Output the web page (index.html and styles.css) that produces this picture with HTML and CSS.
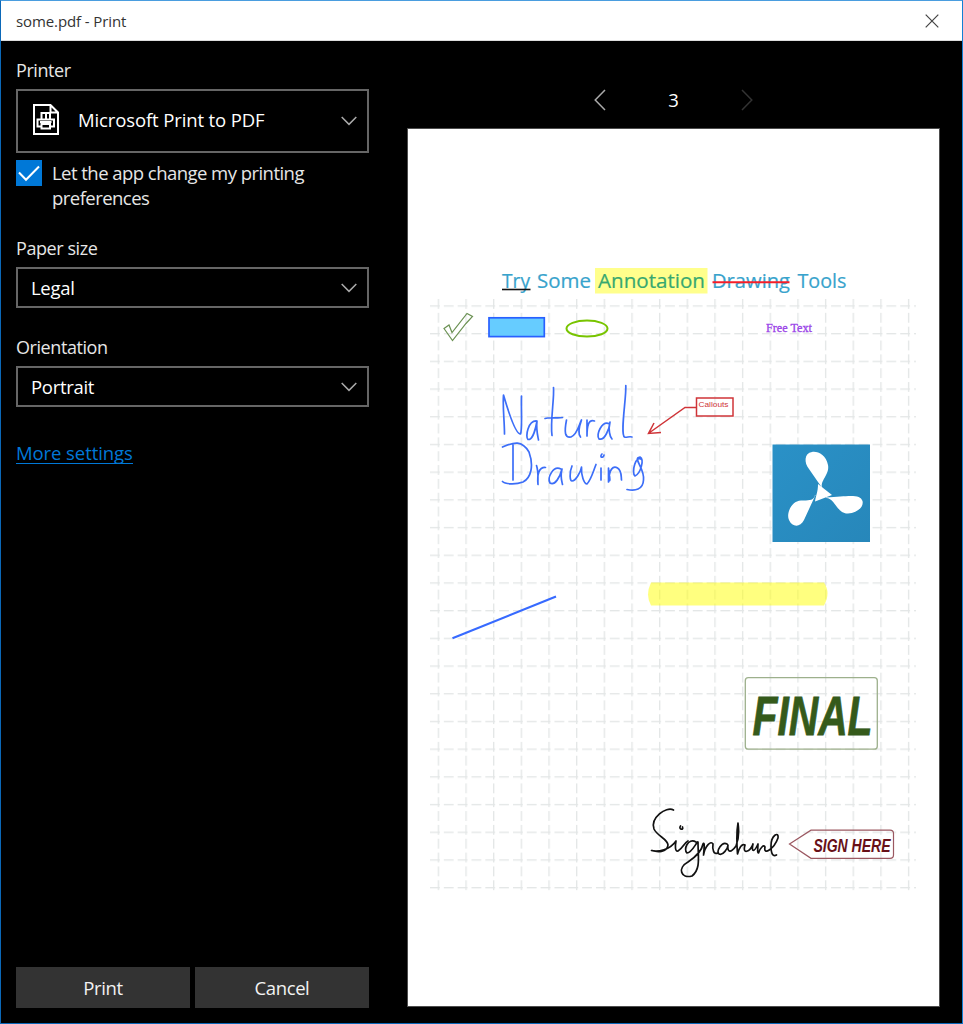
FILE: index.html
```html
<!DOCTYPE html>
<html lang="en">
<head>
<meta charset="utf-8">
<title>some.pdf - Print</title>
<link rel="stylesheet" href="styles.css">
</head>
<body>
<div class="window">
  <header class="titlebar">
    <span class="title">some.pdf - Print</span>
    <svg class="close" viewBox="0 0 14 14"><path d="M.7.7 13.3 13.3M13.3.7.7 13.3"/></svg>
  </header>
  <main class="content">
    <aside class="sidebar">
      <label class="label">Printer</label>
      <div class="select select-printer">
        <svg class="printer-icon" viewBox="0 0 26 31">
          <path d="M1 1H17.500L25 8.500V30H1ZM17.500 1V8.500H25"/>
          <path d="M8.500 15V9H17V15M8.500 22.500H4.500V15.500H21V22.500H17M8.500 20H17V24.500H8.500ZM7 18H18.500M13 9V15"/>
        </svg>
        <span class="value-printer">Microsoft Print to PDF</span>
        <svg class="chevron" viewBox="0 0 16 10"><path d="M.7 1 8 8.400 15.300 1"/></svg>
      </div>
      <div class="check-row">
        <span class="checkbox"><svg viewBox="0 0 26 26"><path d="M3 12.500 10 19.700 23 6.500"/></svg></span>
        <span class="check-text">Let the app change my printing<br>preferences</span>
      </div>
      <label class="label label-paper">Paper size</label>
      <div class="select"><span>Legal</span><svg class="chevron" viewBox="0 0 16 10"><path d="M.7 1 8 8.400 15.300 1"/></svg></div>
      <label class="label label-orient">Orientation</label>
      <div class="select"><span>Portrait</span><svg class="chevron" viewBox="0 0 16 10"><path d="M.7 1 8 8.400 15.300 1"/></svg></div>
      <a class="more">More settings</a>
      <div class="buttons"><button class="button">Print</button><button class="button">Cancel</button></div>
    </aside>
    <section class="preview">
      <nav class="pager">
        <svg class="arrow" viewBox="0 0 12 22"><path d="M11 1 1.200 11 11 21"/></svg>
        <span class="page-number">3</span>
        <svg class="arrow arrow-disabled" viewBox="0 0 12 22"><path d="M1 1 10.800 11 1 21"/></svg>
      </nav>
      <svg class="page" viewBox="408 129 531 877">
        <defs>
          <pattern id="columns" x="437.700" y="299" width="27.660" height="13.840" patternUnits="userSpaceOnUse"><path d="M.7 0V9.800" stroke="#e3e6e6" stroke-width="1.300"/></pattern>
          <pattern id="rows" x="430" y="305.300" width="13.830" height="27.700" patternUnits="userSpaceOnUse"><path d="M0 .7H9.800" stroke="#e3e6e6" stroke-width="1.300"/></pattern>
          <linearGradient id="logo" x1="0" y1="0" x2="1" y2="1"><stop offset="0" stop-color="#2a91c7"/><stop offset="1" stop-color="#2787ba"/></linearGradient>
        </defs>
        <rect x="430" y="299" width="486" height="595" fill="url(#columns)"/>
        <rect x="430" y="299" width="486" height="595" fill="url(#rows)"/>

        <rect x="595" y="268" width="112.500" height="25.500" fill="#ffff8c"/>
        <g class="heading">
          <text x="502" y="288" textLength="28" lengthAdjust="spacingAndGlyphs">Try</text>
          <text x="537" y="288" textLength="54" lengthAdjust="spacingAndGlyphs">Some</text>
          <text x="598" y="288" textLength="107" lengthAdjust="spacingAndGlyphs" class="marked">Annotation</text>
          <text x="712" y="288" textLength="78" lengthAdjust="spacingAndGlyphs">Drawing</text>
          <text x="797.500" y="288" textLength="49" lengthAdjust="spacingAndGlyphs">Tools</text>
        </g>
        <path d="M502 289.500H530.500" stroke="#111" stroke-width="1.600"/>
        <path d="M712.500 282.300H789.500" stroke="#f51e28" stroke-width="2"/>

        <path d="M444 328.500 449 325 452 332.500 467 313.500 472.500 316.500 466 323.500 452.500 340.500Z" fill="none" stroke="#6b9153" stroke-width="1.200"/>
        <rect x="489" y="317.800" width="55.300" height="18.800" fill="#66ccff" stroke="#2860ff" stroke-width="1.700"/>
        <ellipse cx="587" cy="328.600" rx="20.500" ry="8" fill="none" stroke="#78c400" stroke-width="2"/>
        <text class="free-text" x="766" y="332" textLength="46" lengthAdjust="spacingAndGlyphs">Free Text</text>

        <g class="blue-ink">
          <path d="M504.500 434C504.500 421 502.500 407 503.500 395C507 407 515 434 520.500 434C522.500 430 521 409 521.500 396"/>
          <path d="M537 421C528 420 525 437 528 439.500C533 440 536 427 537 421C536 430 538 437 538.500 440"/>
          <path d="M553.500 387.500C554.500 398 550 422 552 435.500M545 418.500C551 416.500 557 419 562.500 417.500"/>
          <path d="M566.500 420C564 433 565 438 571 437C577 435 579 425 581.500 420C579 427 578 434 580.500 437"/>
          <path d="M587 420V436C587 427 588 419 594.500 421"/>
          <path d="M609.500 424C602 420 595.500 435 599 439C605 441 609.500 428 610 422C608 430 610 437 612 439"/>
          <path d="M625.800 385.500C626.500 397 620 434 624.500 437C626.500 438 629 436 632 437"/>
          <path d="M513 445V480M502.500 447C514 442 522 440 529 452C534 466 531 478 523 482C515 485 505 484 502.500 481.500"/>
          <path d="M536.500 465.500C539 473 537.500 479 538 484.500C537 474 539 467 545.500 467.500"/>
          <path d="M561 469C553 465 547 478 550 483C555 486 560 477 562 469C560 477 562 482 562.500 484.500"/>
          <path d="M572 466C569 473 570 481 572 481C576 481 581 471 581.500 467C581 475 584 484 587 484C591 480 593 472 596 464.500"/>
          <path d="M601 468 601 480M602 454C599 457 603 459 604 455 602 453 602 454Z"/>
          <path d="M608.500 482V468C609 474 611 483 609 480C609 470 613 465 617.500 468C622 471 621 476 621.500 480"/>
          <path d="M642 460C636 453 631 473 635 476C640 474 645 460 640 457C632 458 645 468 643.500 480C643 490 635 491 627 489.500"/>
        </g>
        <path d="M452.500 638.300 556 596.500" stroke="#376aff" stroke-width="2.200"/>

        <g fill="none" stroke="#cf3438" stroke-width="1.500">
          <path d="M696 407.500H685L649 433M654 423 648.500 433.500 661 432.500"/>
          <rect x="696.500" y="398" width="36.500" height="18"/>
        </g>
        <text class="callout" x="698.500" y="407" textLength="30" lengthAdjust="spacingAndGlyphs">Callouts</text>

        <rect x="772.500" y="444.500" width="97.500" height="97.500" fill="url(#logo)"/>
        <g fill="#fff">
          <path d="M822.500 488.500C819 481 830 475 828 465C826 455 818 451 812 452C804 453 804 463 809 469Z"/>
          <path d="M826 498C835 498 837 514 848 513.500C857 513 864 507 862.500 501C860 494 850 496 826 497.500Z"/>
          <path d="M815 495C814 501 808 500.500 801 500.500C791 501 786 514 789 520C792 527 800 528 804 520L815.500 495Z"/>
          <path d="M818 484 832 495 815 501.500C816 495 818 492 818 484Z"/>
        </g>

        <path d="M651 582.500H824Q831 593 824 605.500H651Q645 595 651 582.500Z" fill="#ffff00" fill-opacity=".5"/>

        <rect x="745.300" y="677.700" width="132" height="71.500" rx="3" fill="none" stroke="#9db08c" stroke-width="1.300"/>
        <text class="final" x="752.500" y="735" textLength="120" lengthAdjust="spacingAndGlyphs">FINAL</text>

        <g class="black-ink">
          <path d="M673.500 810C666 806 650 818 654 829C657 836 668 839 668 845C667 853 657 852 651.500 850.500C658 852 670 850 676 841C675 846 675 852 678 851C683 848 684 843 688 841"/>
          <path d="M680.500 826C678 829 684 831 682.500 827"/>
          <path d="M696 842C688 837 683 850 687 853C692 853 697 841 698 842C698 857 701 869 692 876C681 879 677 868 688 862C697 856 702 850 703 844C705 841 704 850 703.500 855C705 846 711 840 713 844C712 850 714 855 718 853"/>
          <path d="M727 844C722 841 716 851 719 854C723 856 728 848 728 845C727 853 731 853 736 846C739 839 739 830 738 823C736 834 737 847 737.500 854C739 848 742 843 745 845C742 855 750 852 753 844C751 852 754 853 758 844C758 848 757 853 758.500 853C760 848 764 844 765 847C763 856 774 849 778 838C779 831 771 835 771 846C771 854 773 857 776.500 855"/>
        </g>
        <path d="M789.500 844 811 830.200H890Q893.500 830.200 893.500 833.500V855Q893.500 858.300 890 858.300H811Z" fill="none" stroke="#9b5861" stroke-width="1.200"/>
        <text class="sign-here" x="813.500" y="851.500" textLength="77" lengthAdjust="spacingAndGlyphs">SIGN HERE</text>
      </svg>
    </section>
  </main>
</div>
</body>
</html>
```
FILE: styles.css
```css
* { box-sizing: border-box; }
body { margin: 0; background: #000; font-family: "Open Sans", "Noto Sans", sans-serif; }
.window { width: 963px; height: 1024px; border: 1px solid #0b68b8; border-top-color: #4a9ddf; border-right-color: #1380d4; display: flex; flex-direction: column; color: #e6e6e6; }
.titlebar { height: 40px; background: #fff; border-bottom: 1px solid #ddd; display: flex; align-items: center; justify-content: space-between; padding: 0 23px 0 15px; flex: none; }
.title { color: #333; font-size: 15px; letter-spacing: -.1px; }
svg { display: block; fill: none; }
.close { width: 14px; height: 14px; stroke: #444; stroke-width: 1.2; }
.content { display: flex; flex: 1; }
.sidebar { width: 368px; padding: 17px 0 15px 15px; display: flex; flex-direction: column; }
.label { height: 31px; line-height: 25px; font-size: 18px; letter-spacing: -.43px; }
.label-paper { margin-top: 27px; }
.label-orient { margin-top: 27px; }
.select { width: 353px; height: 41px; flex: none; border: 2px solid #666; display: flex; align-items: center; padding: 0 10px 0 13px; font-size: 18.5px; letter-spacing: -.3px; color: #fff; }
.select-printer { height: 64px; padding-left: 15px; padding-bottom: 3px; }
.value-printer { letter-spacing: -.12px; }
.printer-icon { width: 26px; height: 31px; stroke: #fff; stroke-width: 2; margin-right: 19px; }
.chevron { width: 16px; height: 10px; margin-left: auto; margin-top: 1px; stroke: #aaa; stroke-width: 1.5; }
.select-printer .chevron { margin-top: 3px; }
.check-row { display: flex; margin-top: 7px; height: 49px; gap: 10px; }
.checkbox { width: 26px; height: 26px; background: #0078d7; flex: none; }
.checkbox svg { width: 26px; height: 26px; stroke: #fff; stroke-width: 2; }
.check-text { font-size: 18.5px; line-height: 24.5px; letter-spacing: -.54px; margin-top: 1px; white-space: nowrap; }
.more { align-self: flex-start; margin-top: 33px; font-size: 18.5px; line-height: 25px; height: 24px; border-bottom: 1px solid #0078d7; color: #0078d7; letter-spacing: -.08px; }
.buttons { display: flex; gap: 5px; margin-top: auto; }
.button { flex: 1; height: 41px; border: 0; padding: 0; background: #333; color: #f2f2f2; font: 18.5px "Open Sans", sans-serif; letter-spacing: -.4px; }
.preview { margin-left: 38px; width: 533px; padding-top: 47px; }
.pager { height: 40px; display: flex; align-items: flex-start; padding: 1px 0 0 187px; }
.arrow { width: 12px; height: 22px; stroke: #aaa; stroke-width: 1.5; }
.arrow-disabled { stroke: #333; }
.page-number { width: 135px; height: 22px; line-height: 22px; text-align: center; font-size: 18.5px; color: #fff; }
.page { width: 533px; height: 879px; border: 1px solid #4d4d4d; background: #fff; }
.heading { font-family: "Open Sans", sans-serif; font-size: 19.5px; fill: #38a3cc; stroke: #38a3cc; stroke-width: .2; }
.marked { fill: #37a870; stroke: #37a870; }
.free-text { font: 12px "Liberation Serif", serif; fill: #9b44e8; stroke: #9b44e8; stroke-width: .3; }
.callout { font: 8px "Liberation Sans", sans-serif; fill: #cf3438; }
.blue-ink { stroke: #3c6ef8; stroke-width: 1.7; stroke-linecap: round; stroke-linejoin: round; }
.black-ink { stroke: #111; stroke-width: 1.7; stroke-linecap: round; stroke-linejoin: round; }
.final { font: italic 700 55px "Liberation Sans", sans-serif; fill: #355a1b; stroke: #355a1b; stroke-width: .8; }
.sign-here { font: italic 700 18.5px "Liberation Sans", sans-serif; fill: #681018; }
```
